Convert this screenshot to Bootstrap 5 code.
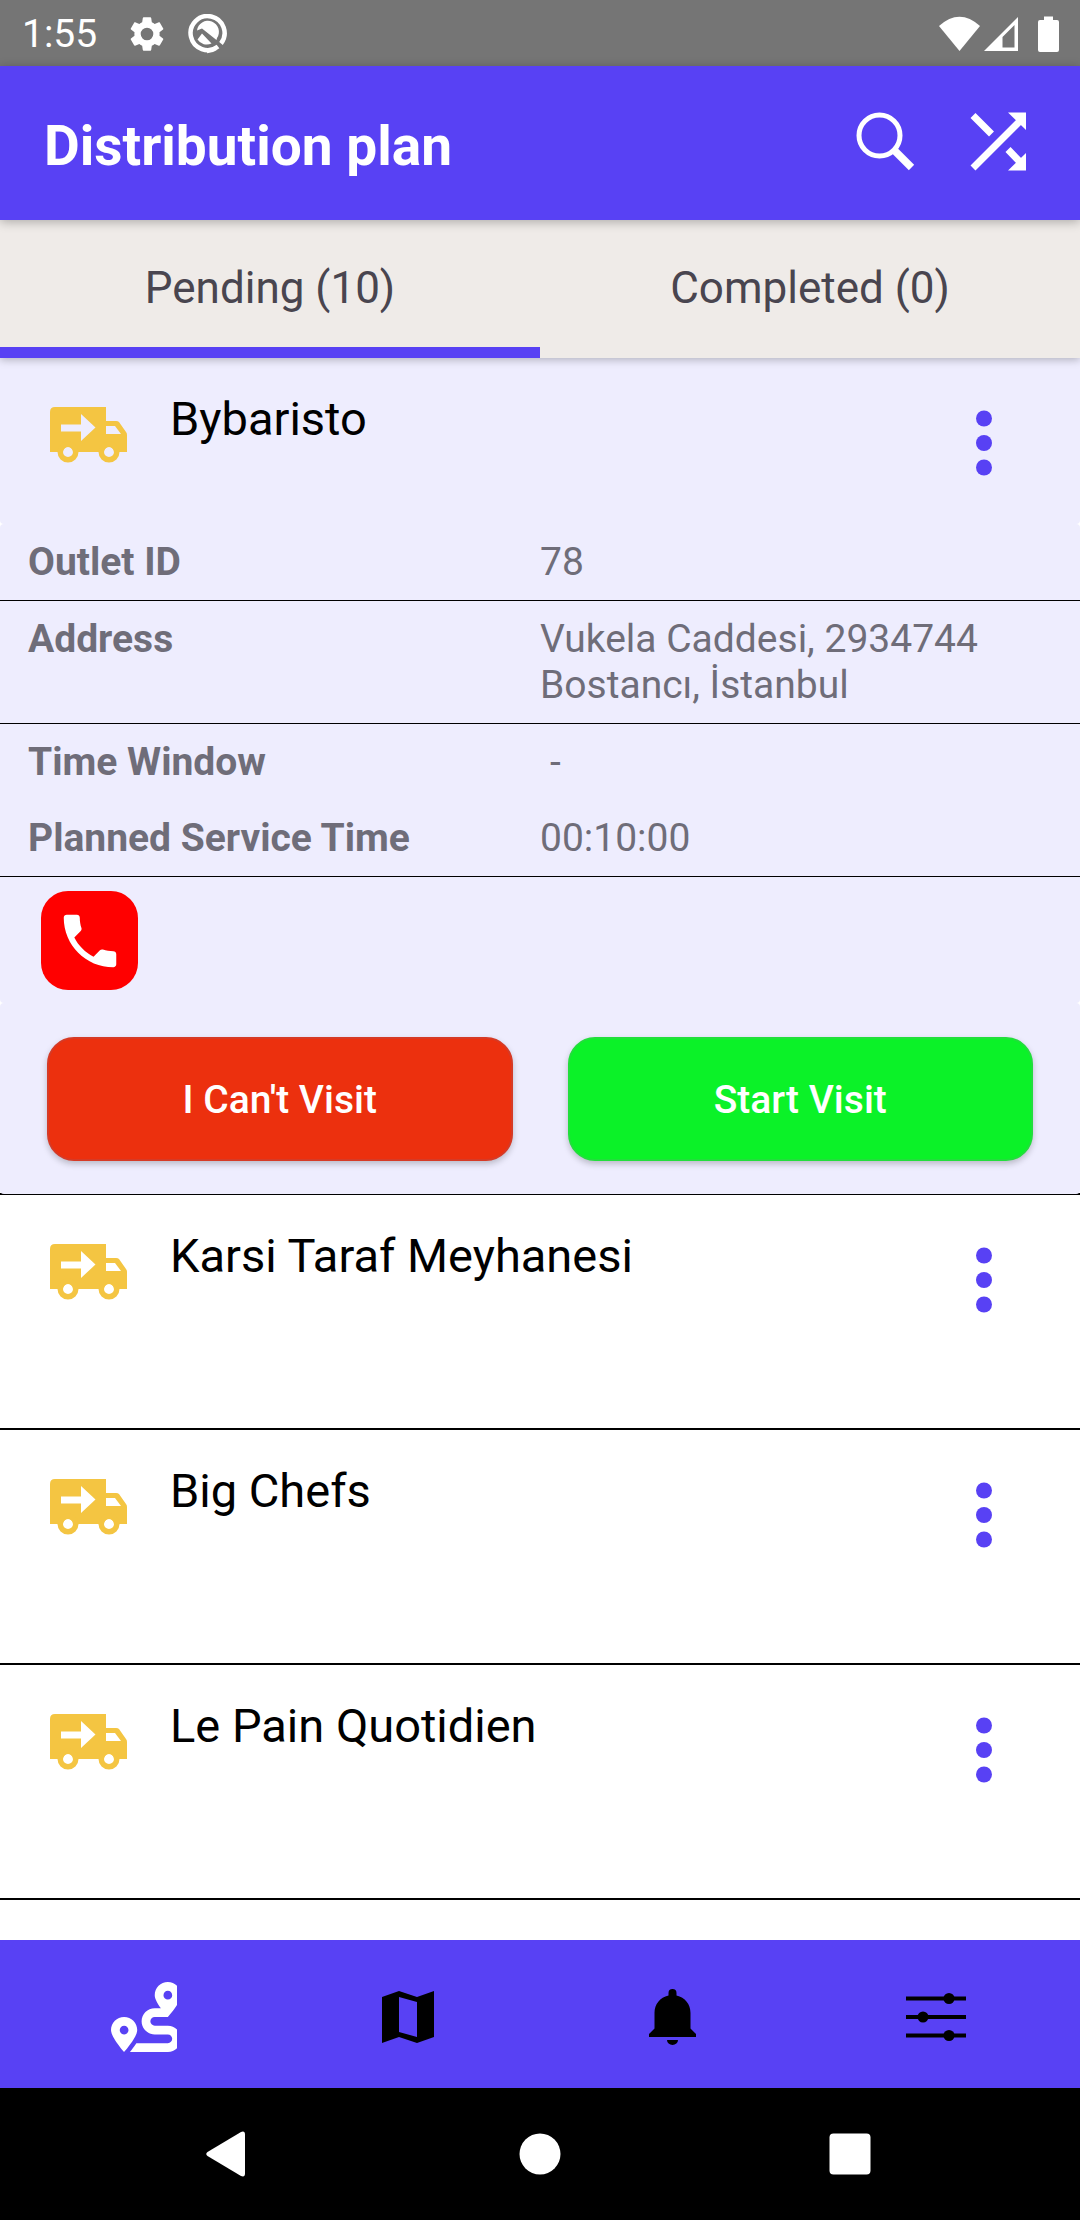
<!DOCTYPE html>
<html lang="en">
<head>
<meta charset="utf-8">
<meta name="viewport" content="width=device-width, initial-scale=1">
<title>Distribution plan</title>
<link href="https://cdn.jsdelivr.net/npm/bootstrap@5.3.0/dist/css/bootstrap.min.css" rel="stylesheet">
<style>
  :root { --brand: #5841f4; --panel: #eeedfe; --truck: #f4c542; }
  body { font-family: Roboto, "Liberation Sans", sans-serif; color: #000; background: #fff; }
  svg { display: block; flex: none; }
  .plain-btn { background: none; border: 0; padding: 0; color: inherit; }

  .status-bar { background: #757575; color: #fff; height: 66px; padding: 2px 20px 0 22px; font-size: 39px; line-height: 46px; }
  .status-icons { gap: 19px; margin-left: 29px; }
  .app-bar { background: var(--brand); color: #fff; height: 154px; padding: 0 54px 0 44px; box-shadow: 0 2px 10px rgba(0,0,0,.28); z-index: 3; }
  .app-title { font-size: 55px; line-height: 64px; font-weight: 700; padding-top: 6px; }
  .app-actions { gap: 55px; padding-bottom: 4px; }

  .plan-tabs { background: #efebe8; height: 138px; box-shadow: 0 2px 8px rgba(0,0,0,.25); z-index: 2; }
  .plan-tabs .nav-link { background: none; border: 0; border-radius: 0; border-bottom: 11px solid transparent; color: #49454f; font-size: 44px; line-height: 52px; padding: 8px 0 0; }
  .plan-tabs .nav-link.active { color: #49454f; background: none; border-bottom-color: var(--brand); }

  .stop { border-bottom: 2px solid #000; }
  .stop-head { min-height: 233px; padding: 0 48px 0 50px; }
  .stop-head .truck { margin-top: 49px; }
  .stop-head h2 { font-size: 47px; line-height: 56px; font-weight: 400; margin: 33px 0 0 43px; }
  .stop-head .plain-btn { margin-top: 36px; color: var(--brand); }
  .stop.open .stop-head { min-height: 166px; background: var(--panel); border-radius: 0 0 4px 4px; }

  .stop-info { background: var(--panel); border-radius: 4px; color: #6f6d79; font-size: 39px; line-height: 46px; }
  .info-row { padding: 15px 0; }
  .info-row.ruled { border-bottom: 1px solid #000; }
  .info-row dt { font-weight: 700; padding-left: 28px; }
  .info-row dd { white-space: pre-line; padding-right: 28px; }
  .info-row dd.dash { padding-left: 10px; }
  .call-row { padding: 14px 41px 13px; }
  .call-btn { width: 97px; height: 99px; border-radius: 27px; background: #f00; color: #fff; }
  .stop-actions { background: var(--panel); border-radius: 4px; padding: 34px 47px 33px; gap: 55px; margin-bottom: -1px; position: relative; }
  .visit-btn { height: 124px; border-radius: 27px; font-size: 39px; line-height: 46px; font-weight: 500; color: #fff; border: 2px solid; padding: 2px 0 0; box-shadow: 0 3px 6px rgba(0,0,0,.22); }
  .visit-no, .visit-no:hover { background: #ec300e; border-color: #d63a26; color: #fff; }
  .visit-go, .visit-go:hover { background: #0bf228; border-color: #22de3c; color: #fff; }

  .bottom-nav { background: var(--brand); height: 148px; padding: 6px 12px 0; color: #000; z-index: 2; }
  .bottom-nav .active { color: #fff; }
  .system-nav { background: #000; color: #fff; height: 132px; }
  .system-nav .plain-btn { width: 310px; }
</style>
</head>
<body class="d-flex flex-column min-vh-100">

<svg width="0" height="0" class="position-absolute" aria-hidden="true">
  <symbol id="truck" viewBox="0 0 77 56">
    <path fill="#f4c542" fill-rule="evenodd" d="M5 0H56V14H66Q68 14 69 15L76 25Q77 26 77 28V45H64A5 5 0 0 0 54 45H23A5 5 0 0 0 13 45H0V5Q0 0 5 0ZM11 17.500V24.500H31V34L45.500 20.500L31 7V17.500ZM56 19V27H71L65 19Z"/>
    <circle cx="18" cy="45" r="7.750" fill="none" stroke="#f4c542" stroke-width="5.500"/>
    <circle cx="59" cy="45" r="7.750" fill="none" stroke="#f4c542" stroke-width="5.500"/>
  </symbol>
  <symbol id="dots" viewBox="0 0 96 98">
    <circle cx="48" cy="24.500" r="8"/><circle cx="48" cy="49" r="8"/><circle cx="48" cy="73.500" r="8"/>
  </symbol>
</svg>

<div class="status-bar d-flex align-items-center">
  <span>1:55</span>
  <div class="status-icons d-flex align-items-center">
    <svg width="42" height="42" viewBox="0 0 24 24" fill="currentColor" aria-hidden="true"><path d="M19.140 12.940c.04-.3.060-.61.060-.940 0-.32-.02-.64-.070-.940l2.030-1.580c.18-.14.230-.41.120-.61l-1.920-3.320c-.12-.22-.37-.29-.59-.22l-2.390.960c-.5-.38-1.030-.7-1.620-.940l-.36-2.540c-.04-.24-.24-.41-.48-.41h-3.840c-.24 0-.43.170-.47.410l-.36 2.540c-.59.240-1.130.570-1.620.940l-2.390-.960c-.22-.08-.47 0-.59.220L2.740 8.870c-.12.210-.08.470.120.610l2.030 1.580c-.05.3-.09.630-.09.940s.02.640.070.940l-2.030 1.580c-.18.140-.23.410-.12.610l1.920 3.320c.12.220.370.290.590.220l2.390-.960c.5.380 1.030.7 1.620.940l.36 2.540c.05.240.24.410.48.410h3.840c.24 0 .44-.17.470-.41l.36-2.540c.59-.24 1.130-.56 1.620-.940l2.390.960c.22.080.470 0 .59-.22l1.920-3.320c.12-.22.070-.47-.12-.61l-2.010-1.580zM12 15.600a3.600 3.600 0 1 1 0-7.200 3.600 3.600 0 0 1 0 7.200z"/></svg>
    <svg width="40" height="40" viewBox="0 0 40 40" aria-hidden="true">
      <path d="M31 32.500A17 17 0 1 1 34 29.500M28.500 34.300A17 17 0 0 1 20 37" fill="none" stroke="#fff" stroke-width="4.500"/>
      <path fill="#fff" d="M10 16.500A11 11 0 1 1 30 24L29.500 26L15 14.500ZM15 19.500L24.500 29.500A11 11 0 0 1 10.500 25.500Z"/>
    </svg>
  </div>
  <svg class="ms-auto" width="122" height="36" viewBox="0 0 122 36" fill="#fff" aria-label="Wi-Fi, signal, battery">
    <path d="M21.500 35L1 10Q21.500-8.500 42 10Z"/>
    <path fill-rule="evenodd" d="M80 1V35H46ZM76.500 9L64.500 21V31.500H76.500Z"/>
    <path d="M106 0.500H115V4H119Q121 4 121 6V34Q121 36 119 36H102Q100 36 100 34V6Q100 4 102 4H106Z"/>
  </svg>
</div>

<header class="app-bar d-flex align-items-center position-relative">
  <h1 class="app-title mb-0 me-auto">Distribution plan</h1>
  <div class="app-actions d-flex">
    <button class="plain-btn" type="button" aria-label="Search">
      <svg width="59" height="59" viewBox="0 0 59 59" fill="none" stroke="#fff"><circle cx="23.500" cy="23.500" r="20.500" stroke-width="5"/><path d="M38 38L55.500 55.500" stroke-width="7.500"/></svg>
    </button>
    <button class="plain-btn" type="button" aria-label="Shuffle">
      <svg width="56" height="59" viewBox="0 0 56 59"><path d="M3 3.500L21.500 22M3 56L50 9M38 37.500L50 50" fill="none" stroke="#fff" stroke-width="7"/><path fill="#fff" d="M38 .5H56V18ZM56 41V58.500H38Z"/></svg>
    </button>
  </div>
</header>

<nav class="plan-tabs nav nav-fill position-relative" role="tablist">
  <button class="nav-link active w-50" type="button" role="tab" aria-selected="true">Pending (10)</button>
  <button class="nav-link w-50" type="button" role="tab" aria-selected="false">Completed (0)</button>
</nav>

<main class="flex-grow-1">
  <article class="stop open">
    <div class="stop-head d-flex align-items-start">
      <svg class="truck" width="77" height="56" aria-hidden="true"><use href="#truck"/></svg>
      <h2>Bybaristo</h2>
      <button class="plain-btn ms-auto" type="button" aria-label="More options"><svg width="96" height="98" fill="currentColor"><use href="#dots"/></svg></button>
    </div>
    <div class="stop-info">
      <dl class="mb-0">
        <div class="info-row ruled d-flex"><dt class="w-50">Outlet ID</dt><dd class="w-50 mb-0">78</dd></div>
        <div class="info-row ruled d-flex"><dt class="w-50">Address</dt><dd class="w-50 mb-0">Vukela Caddesi, 2934744
Bostancı, İstanbul</dd></div>
        <div class="info-row d-flex"><dt class="w-50">Time Window</dt><dd class="dash w-50 mb-0">-</dd></div>
        <div class="info-row ruled d-flex"><dt class="w-50">Planned Service Time</dt><dd class="w-50 mb-0">00:10:00</dd></div>
      </dl>
      <div class="call-row">
        <button class="plain-btn call-btn d-flex align-items-center justify-content-center" type="button" aria-label="Call outlet">
          <svg width="70" height="70" viewBox="0 0 24 24" fill="currentColor"><path d="M6.620 10.790c1.440 2.830 3.760 5.140 6.590 6.590l2.200-2.200c.27-.27.670-.36 1.020-.24 1.120.370 2.330.570 3.570.570.550 0 1 .45 1 1V20c0 .55-.45 1-1 1-9.390 0-17-7.610-17-17 0-.55.450-1 1-1h3.500c.55 0 1 .45 1 1 0 1.250.2 2.450.570 3.570.110.350.030.740-.25 1.020l-2.200 2.200z"/></svg>
        </button>
      </div>
    </div>
    <div class="stop-actions d-flex">
      <button class="btn visit-btn visit-no w-50" type="button">I Can't Visit</button>
      <button class="btn visit-btn visit-go w-50" type="button">Start Visit</button>
    </div>
  </article>

  <article class="stop">
    <div class="stop-head d-flex align-items-start">
      <svg class="truck" width="77" height="56" aria-hidden="true"><use href="#truck"/></svg>
      <h2>Karsi Taraf Meyhanesi</h2>
      <button class="plain-btn ms-auto" type="button" aria-label="More options"><svg width="96" height="98" fill="currentColor"><use href="#dots"/></svg></button>
    </div>
  </article>

  <article class="stop">
    <div class="stop-head d-flex align-items-start">
      <svg class="truck" width="77" height="56" aria-hidden="true"><use href="#truck"/></svg>
      <h2>Big Chefs</h2>
      <button class="plain-btn ms-auto" type="button" aria-label="More options"><svg width="96" height="98" fill="currentColor"><use href="#dots"/></svg></button>
    </div>
  </article>

  <article class="stop">
    <div class="stop-head d-flex align-items-start">
      <svg class="truck" width="77" height="56" aria-hidden="true"><use href="#truck"/></svg>
      <h2>Le Pain Quotidien</h2>
      <button class="plain-btn ms-auto" type="button" aria-label="More options"><svg width="96" height="98" fill="currentColor"><use href="#dots"/></svg></button>
    </div>
  </article>
</main>

<footer class="sticky-bottom">
  <nav class="bottom-nav d-flex" aria-label="Main">
    <a class="active flex-fill d-flex align-items-center justify-content-center w-25" href="#" aria-label="Route">
      <svg width="66" height="70" viewBox="0 0 483 512" fill="currentColor"><path d="M416 320h-96c-17.600 0-32-14.400-32-32s14.400-32 32-32h96s96-107 96-160-43-96-96-96-96 43-96 96c0 25.500 22.200 63.400 45.300 96H320c-52.900 0-96 43.100-96 96s43.100 96 96 96h96c17.600 0 32 14.400 32 32s-14.400 32-32 32H185.500c-16 24.800-33.800 47.700-47.300 64H416c52.900 0 96-43.100 96-96s-43.100-96-96-96zm0-256c17.700 0 32 14.300 32 32s-14.300 32-32 32-32-14.300-32-32 14.300-32 32-32zM96 256c-53 0-96 43-96 96s96 160 96 160 96-107 96-160-43-96-96-96zm0 128c-17.700 0-32-14.300-32-32s14.300-32 32-32 32 14.300 32 32-14.300 32-32 32z"/></svg>
    </a>
    <a class="text-reset flex-fill d-flex align-items-center justify-content-center w-25" href="#" aria-label="Map">
      <svg width="52" height="52" viewBox="0 0 52 52"><path fill-rule="evenodd" d="M0 6L17 0L35 6L52 0V46L35 52L17 46L0 52ZM17 6V41L35 46V11Z"/></svg>
    </a>
    <a class="text-reset flex-fill d-flex align-items-center justify-content-center w-25" href="#" aria-label="Notifications">
      <svg width="47" height="56" viewBox="0 0 47 56"><path d="M19.500 6V4A4 4 0 0 1 27.500 4V6.500C36 8.500 41.500 15 41.500 24V39.500L47 45V48H0V45L5.500 39.500V24C5.500 15 11 8.500 19.500 6.500ZM18 51H29A5.500 5 0 0 1 18 51Z"/></svg>
    </a>
    <a class="text-reset flex-fill d-flex align-items-center justify-content-center w-25" href="#" aria-label="Settings">
      <svg width="60" height="48" viewBox="0 0 60 48"><path d="M0 5.500H60M0 24H60M0 42.500H60" stroke="#000" stroke-width="4"/><circle cx="43" cy="5.500" r="5.500"/><circle cx="17" cy="24" r="5.500"/><circle cx="43" cy="42.500" r="5.500"/></svg>
    </a>
  </nav>
  <div class="system-nav d-flex justify-content-center">
    <button class="plain-btn d-flex align-items-center justify-content-center" type="button" aria-label="Back">
      <svg width="48" height="46" viewBox="0 0 48 46" fill="#fff"><path d="M1.500 21L35 1Q39 -.5 39 3.500V42.500Q39 46.500 35 45L1.500 25Q-1 23 1.500 21Z"/></svg>
    </button>
    <button class="plain-btn d-flex align-items-center justify-content-center" type="button" aria-label="Home">
      <svg width="42" height="42" viewBox="0 0 42 42" fill="#fff"><circle cx="21" cy="21" r="20.500"/></svg>
    </button>
    <button class="plain-btn d-flex align-items-center justify-content-center" type="button" aria-label="Recent apps">
      <svg width="42" height="42" viewBox="0 0 42 42" fill="#fff"><rect width="41" height="41" x=".5" y=".5" rx="4"/></svg>
    </button>
  </div>
</footer>
<script src="https://cdn.jsdelivr.net/npm/bootstrap@5.3.0/dist/js/bootstrap.bundle.min.js"></script>
</body>
</html>
